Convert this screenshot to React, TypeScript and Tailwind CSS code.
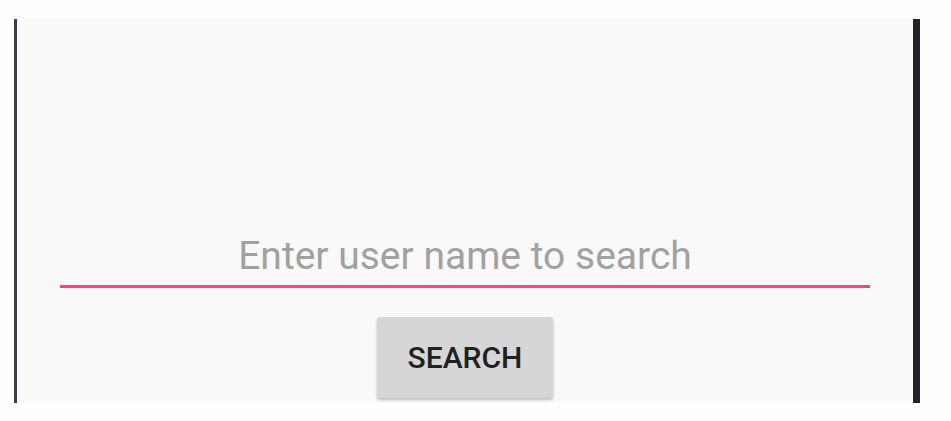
export default function App() {
  return (
    <div className="h-[421px] w-[951px] bg-[#fefefe] pt-[19px] pl-[14px] font-['Roboto',sans-serif]">
      <div className="flex h-[384px] w-[906px] flex-col border-l-[3px] border-r-[7px] border-l-[#3b3c47] border-r-[#23242c] bg-[#f9f9f9]">
        <div className="flex-1" />
        <div className="mx-[43px] flex flex-col items-center border-b-[3px] border-[#ff4081] pb-[6px]">
          <span className="text-[39px] leading-[46px] text-[#a1a1a1]">
            Enter user name to search
          </span>
        </div>
        <div className="flex justify-center pt-[29px] pb-[5px]">
          <button className="h-[81px] w-[176px] rounded-[3px] bg-[#d6d6d6] text-[30px] font-medium text-[#202020] shadow-[0_2px_3px_rgba(0,0,0,0.25)]">
            SEARCH
          </button>
        </div>
      </div>
    </div>
  );
}
